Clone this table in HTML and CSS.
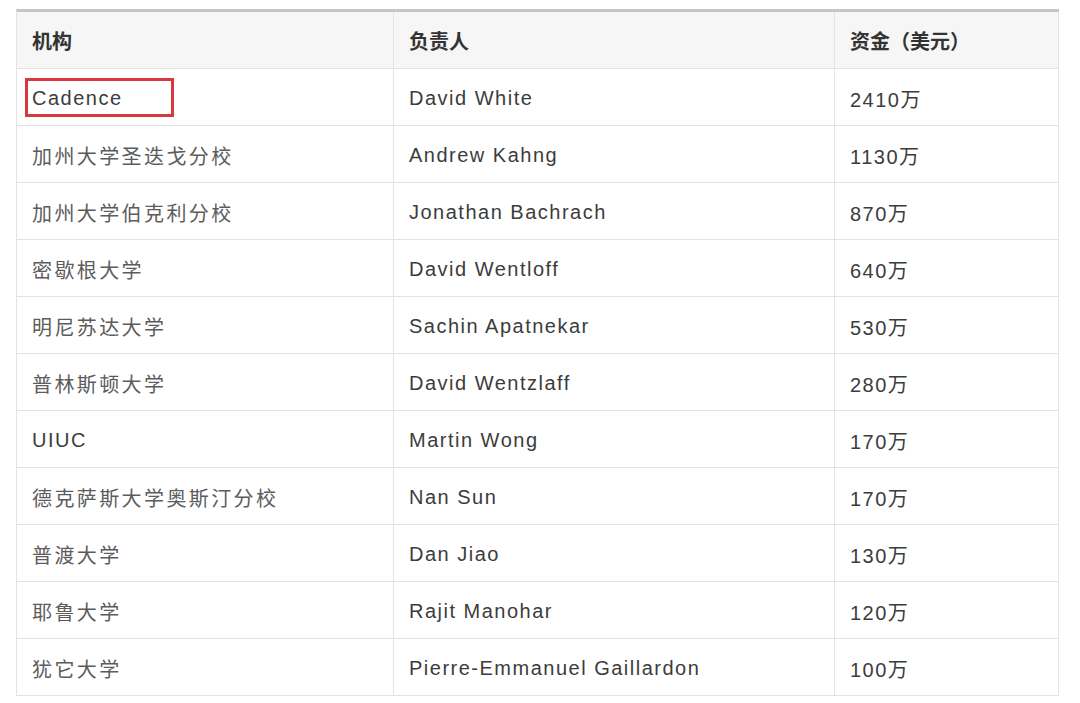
FILE: index.html
```html
<!DOCTYPE html>
<html lang="zh-CN">
<head>
<meta charset="utf-8">
<title>资金表</title>
<link rel="stylesheet" href="styles.css">
</head>
<body>
<div class="page">
  <div class="table">
    <div class="cell head">机构</div>
    <div class="cell head">负责人</div>
    <div class="cell head">资金（美元）</div>

    <div class="cell org"><span class="latin">Cadence</span><span class="mark"></span></div>
    <div class="cell">David White</div>
    <div class="cell">2410万</div>

    <div class="cell org">加州大学圣迭戈分校</div>
    <div class="cell">Andrew Kahng</div>
    <div class="cell">1130万</div>

    <div class="cell org">加州大学伯克利分校</div>
    <div class="cell">Jonathan Bachrach</div>
    <div class="cell">870万</div>

    <div class="cell org">密歇根大学</div>
    <div class="cell">David Wentloff</div>
    <div class="cell">640万</div>

    <div class="cell org">明尼苏达大学</div>
    <div class="cell">Sachin Apatnekar</div>
    <div class="cell">530万</div>

    <div class="cell org">普林斯顿大学</div>
    <div class="cell">David Wentzlaff</div>
    <div class="cell">280万</div>

    <div class="cell org"><span class="latin">UIUC</span></div>
    <div class="cell">Martin Wong</div>
    <div class="cell">170万</div>

    <div class="cell org">德克萨斯大学奥斯汀分校</div>
    <div class="cell">Nan Sun</div>
    <div class="cell">170万</div>

    <div class="cell org">普渡大学</div>
    <div class="cell">Dan Jiao</div>
    <div class="cell">130万</div>

    <div class="cell org">耶鲁大学</div>
    <div class="cell">Rajit Manohar</div>
    <div class="cell">120万</div>

    <div class="cell org">犹它大学</div>
    <div class="cell">Pierre-Emmanuel Gaillardon</div>
    <div class="cell">100万</div>
  </div>
</div>
</body>
</html>
```

FILE: styles.css
```css
html, body {
  margin: 0;
  padding: 0;
  background: #ffffff;
}

.page {
  padding: 9px 0 0 16px;
}

.table {
  display: grid;
  grid-template-columns: 377px 441px 224px;
  width: 1043px;
  box-sizing: border-box;
  border-left: 1px solid #e3e3e3;
  border-top: 3px solid #c6c6c6;
  font-family: "Liberation Sans", Arial, "Noto Sans CJK SC", sans-serif;
  font-size: 20px;
  letter-spacing: 1.5px;
  color: #3c3c3c;
}

.cell {
  position: relative;
  box-sizing: border-box;
  height: 57px;
  padding: 2px 0 0 15px;
  display: flex;
  align-items: center;
  border-right: 1px solid #e3e3e3;
  border-bottom: 1px solid #e3e3e3;
  white-space: nowrap;
}

.head {
  padding-top: 0;
  background: #f6f6f6;
  font-family: "Noto Sans CJK SC", sans-serif;
  font-weight: 700;
  color: #333333;
  letter-spacing: 0;
  font-size: 20px;
}

.org {
  font-family: "Noto Sans CJK SC", sans-serif;
  color: #5c5c5c;
  letter-spacing: 2.4px;
  font-size: 20px;
}

.latin {
  font-family: "Liberation Sans", Arial, sans-serif;
  letter-spacing: 1.5px;
  color: #3c3c3c;
}

.mark {
  position: absolute;
  left: 8px;
  top: 9px;
  width: 149px;
  height: 39px;
  box-sizing: border-box;
  border: 3px solid #d9383f;
}
```
